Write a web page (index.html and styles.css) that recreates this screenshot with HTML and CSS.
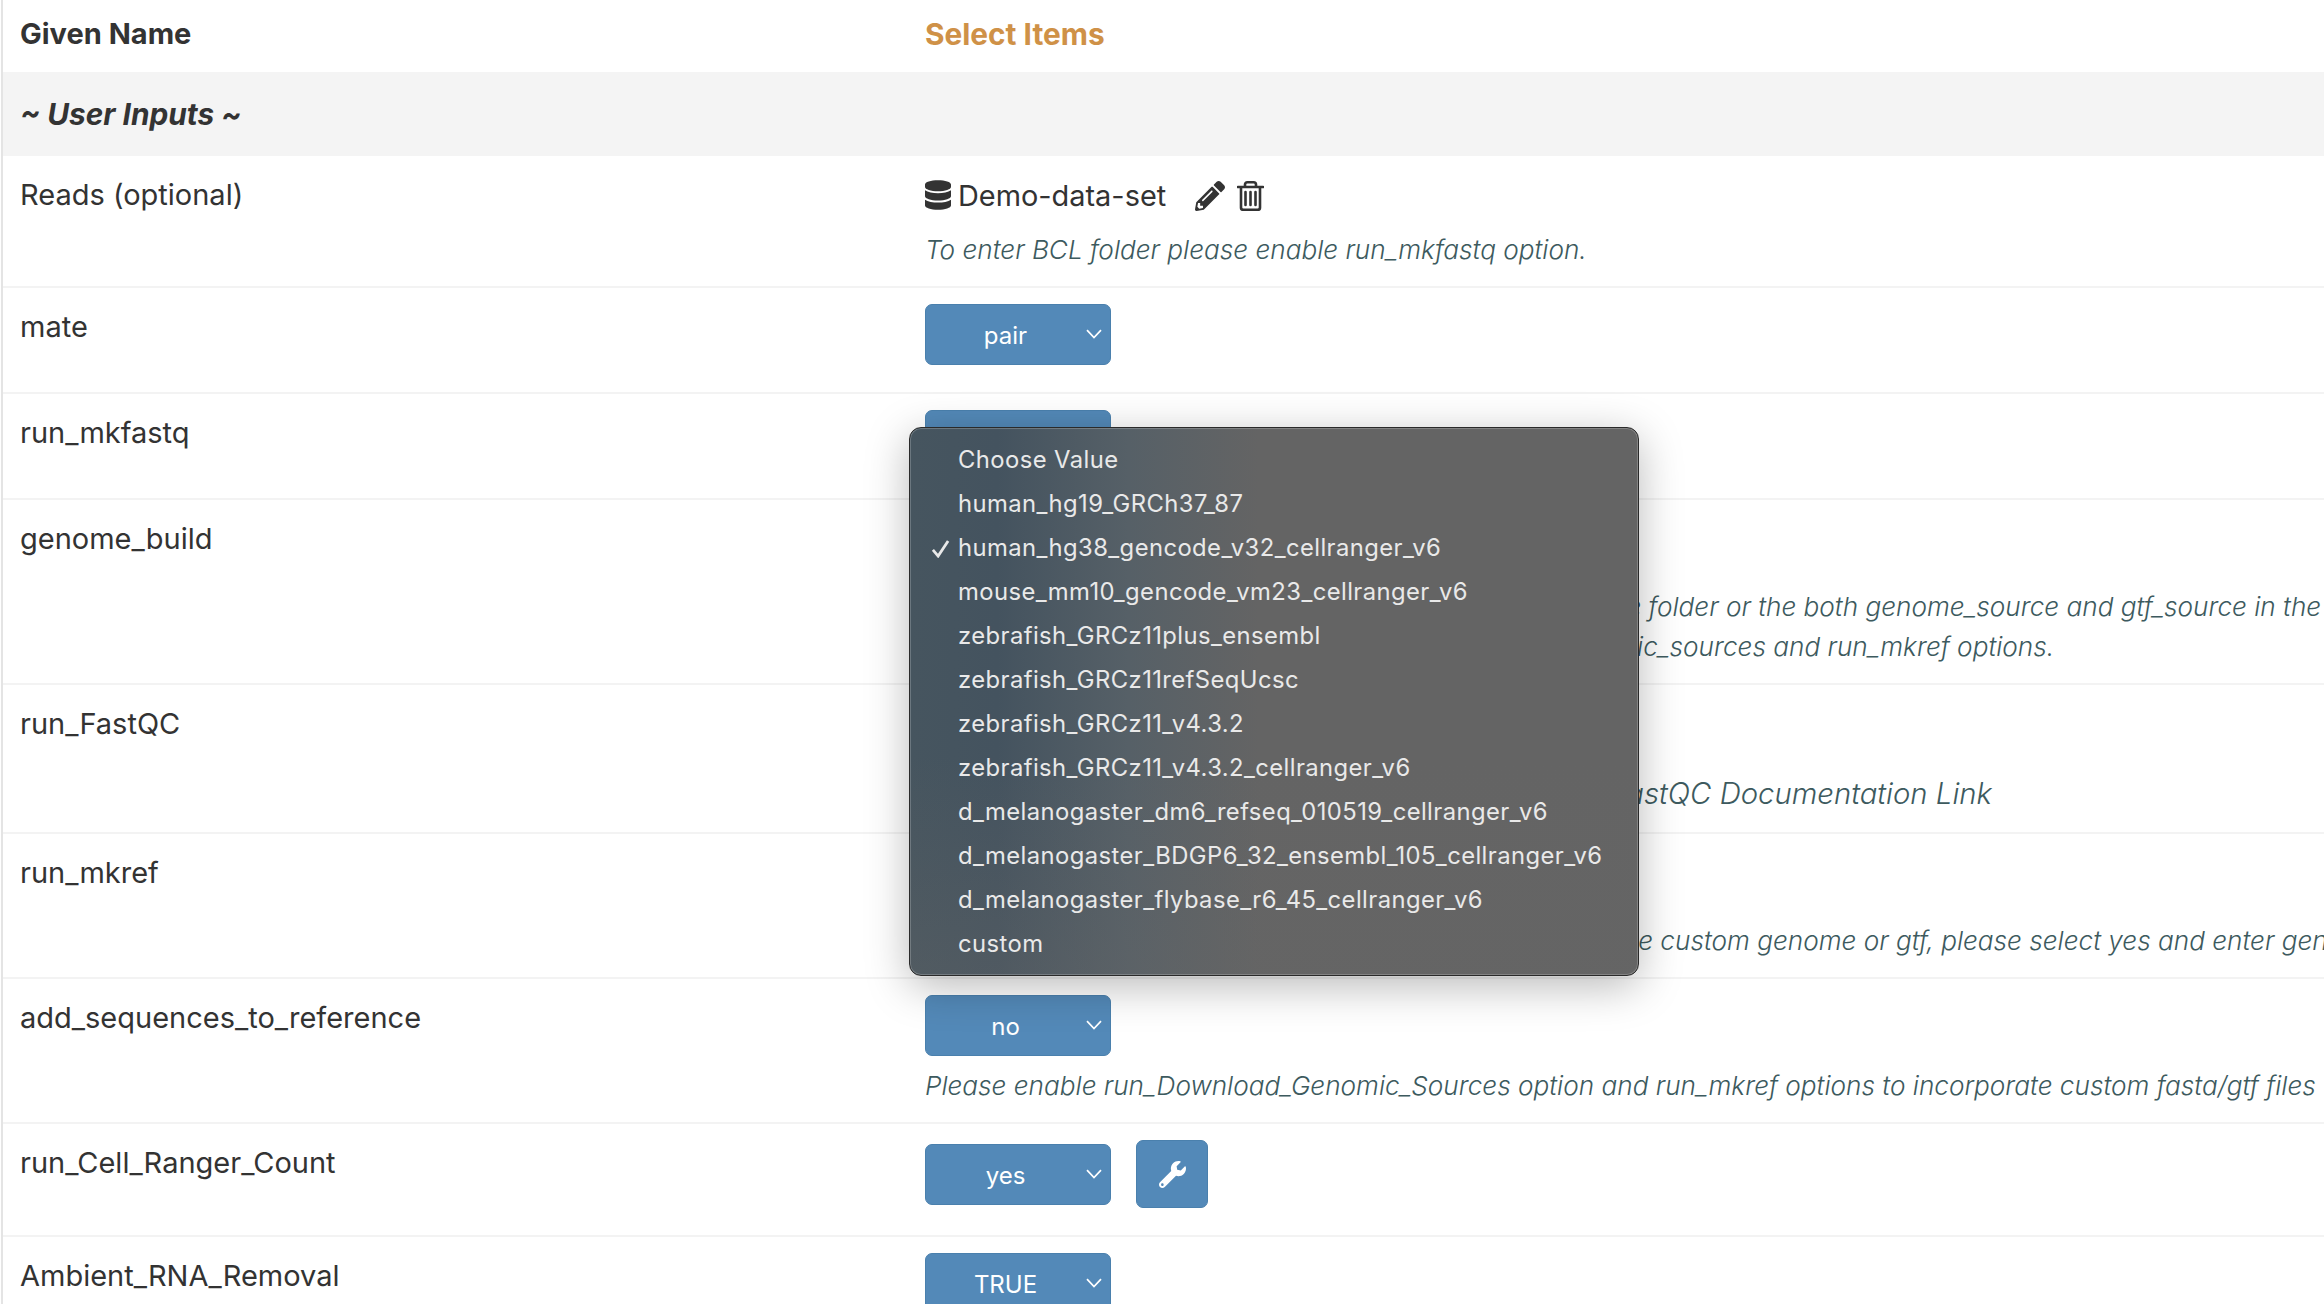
FILE: index.html
```html
<!DOCTYPE html>
<html lang="en">
<head>
<meta charset="utf-8">
<title>Run settings</title>
<link rel="stylesheet" href="styles.css">
</head>
<body>
<main class="sheet">
  <div class="row head">
    <div class="name">Given Name</div>
    <div class="val select-title">Select Items</div>
  </div>
  <div class="band">~ User Inputs ~</div>

  <div class="row">
    <div class="name">Reads (optional)</div>
    <div class="val">
      <div class="file">
        <svg class="ic-db" viewBox="0 0 448 512"><path d="M448 73.143v45.714C448 159.143 347.667 192 224 192S0 159.143 0 118.857V73.143C0 32.857 100.333 0 224 0s224 32.857 224 73.143zM448 176v102.857C448 319.143 347.667 352 224 352S0 319.143 0 278.857V176c48.125 33.143 136.208 48.572 224 48.572S399.874 209.143 448 176zm0 160v102.857C448 479.143 347.667 512 224 512S0 479.143 0 438.857V336c48.125 33.143 136.208 48.572 224 48.572S399.874 369.143 448 336z"/></svg>
        <span class="file-name">Demo-data-set</span>
        <svg class="ic-pen" viewBox="0 0 512 512"><path d="M497.9 142.1l-46.1 46.1c-4.7 4.7-12.3 4.7-17 0l-111-111c-4.7-4.7-4.7-12.3 0-17l46.1-46.1c18.7-18.7 49.1-18.7 67.9 0l60.1 60.1c18.8 18.7 18.8 49.1 0 67.9zM284.2 99.8L21.6 362.4.4 483.9c-2.9 16.4 11.4 30.6 27.8 27.8l121.5-21.3 262.6-262.6c4.3-4.3 4.3-11.3 0-15.6L300 99.8c-4.4-4.3-11.4-4.3-15.8 0zM124.1 339.9c-5.1-5.1-5.1-13.3 0-18.4l154-154c5.1-5.1 13.3-5.1 18.4 0s5.1 13.3 0 18.4l-154 154c-5.1 5.1-13.3 5.1-18.4 0zM88 424h48v36.3l-64.5 11.3-31.1-31.1L51.7 376H88v48z"/></svg>
        <svg class="ic-trash" viewBox="0 0 27 30"><path d="M1 6h25M8 6V3.6Q8 1.3 10.4 1.3h6.2Q19 1.3 19 3.6V6M4 6v20.4Q4 28.8 6.4 28.8h14.2Q23 28.8 23 26.4V6M8.5 11v13M13.5 11v13M18.5 11v13"/></svg>
      </div>
      <p class="note">To enter BCL folder please enable run_mkfastq option.</p>
    </div>
  </div>

  <div class="row plain">
    <div class="name">mate</div>
    <div class="val"><div class="pick"><span>pair</span><svg class="chev" viewBox="0 0 16 10"><path d="M1 1.2l7 7.4 7-7.4"/></svg></div></div>
  </div>

  <div class="row plain">
    <div class="name">run_mkfastq</div>
    <div class="val"><div class="pick"><span>no</span><svg class="chev" viewBox="0 0 16 10"><path d="M1 1.2l7 7.4 7-7.4"/></svg></div></div>
  </div>

  <div class="row">
    <div class="name">genome_build</div>
    <div class="val">
      <div class="pick"><span>custom</span><svg class="chev" viewBox="0 0 16 10"><path d="M1 1.2l7 7.4 7-7.4"/></svg></div>
      <p class="note">If you choose the custom option please enter your genome folder or the both genome_source and gtf_source in the run settings.<br>Otherwise, you can also enable the run_Download_Genomic_sources and run_mkref options.</p>
    </div>
  </div>

  <div class="row">
    <div class="name">run_FastQC</div>
    <div class="val">
      <div class="pick"><span>no</span><svg class="chev" viewBox="0 0 16 10"><path d="M1 1.2l7 7.4 7-7.4"/></svg></div>
      <p class="note link">Please check out the details of this module on the FastQC Documentation Link</p>
    </div>
  </div>

  <div class="row">
    <div class="name">run_mkref</div>
    <div class="val">
      <div class="pick"><span>no</span><svg class="chev" viewBox="0 0 16 10"><path d="M1 1.2l7 7.4 7-7.4"/></svg></div>
      <p class="note">If you would like to create a new local reference file with the custom genome or gtf, please select yes and enter genome_source and gtf_source.</p>
    </div>
  </div>

  <div class="row">
    <div class="name">add_sequences_to_reference</div>
    <div class="val">
      <div class="pick"><span>no</span><svg class="chev" viewBox="0 0 16 10"><path d="M1 1.2l7 7.4 7-7.4"/></svg></div>
      <p class="note">Please enable run_Download_Genomic_Sources option and run_mkref options to incorporate custom fasta/gtf files</p>
    </div>
  </div>

  <div class="row">
    <div class="name">run_Cell_Ranger_Count</div>
    <div class="val tool-line">
      <div class="pick"><span>yes</span><svg class="chev" viewBox="0 0 16 10"><path d="M1 1.2l7 7.4 7-7.4"/></svg></div>
      <div class="tool"><svg viewBox="0 0 512 512"><path d="M507.73 109.1c-2.24-9.03-13.54-12.09-20.12-5.51l-74.36 74.36-67.88-11.31-11.31-67.88 74.36-74.36c6.62-6.62 3.43-17.9-5.66-20.16-47.38-11.74-99.55.91-136.58 37.93-39.64 39.64-50.55 97.1-34.05 147.2L18.74 402.76c-24.99 24.99-24.99 65.51 0 90.5 24.99 24.99 65.51 24.99 90.5 0l213.21-213.21c50.12 16.71 107.47 5.68 147.37-34.22 37.07-37.07 49.7-89.32 37.91-136.73zM64 472c-13.25 0-24-10.75-24-24 0-13.26 10.75-24 24-24s24 10.74 24 24c0 13.25-10.75 24-24 24z"/></svg></div>
    </div>
  </div>

  <div class="row">
    <div class="name">Ambient_RNA_Removal</div>
    <div class="val">
      <div class="pick"><span>TRUE</span><svg class="chev" viewBox="0 0 16 10"><path d="M1 1.2l7 7.4 7-7.4"/></svg></div>
    </div>
  </div>
</main>

<div class="menu">
  <div class="opt">Choose Value</div>
  <div class="opt">human_hg19_GRCh37_87</div>
  <div class="opt"><svg class="tick" viewBox="0 0 20 20"><path d="M2 11.5l5.5 6.5L18 2"/></svg>human_hg38_gencode_v32_cellranger_v6</div>
  <div class="opt">mouse_mm10_gencode_vm23_cellranger_v6</div>
  <div class="opt">zebrafish_GRCz11plus_ensembl</div>
  <div class="opt">zebrafish_GRCz11refSeqUcsc</div>
  <div class="opt">zebrafish_GRCz11_v4.3.2</div>
  <div class="opt">zebrafish_GRCz11_v4.3.2_cellranger_v6</div>
  <div class="opt">d_melanogaster_dm6_refseq_010519_cellranger_v6</div>
  <div class="opt">d_melanogaster_BDGP6_32_ensembl_105_cellranger_v6</div>
  <div class="opt">d_melanogaster_flybase_r6_45_cellranger_v6</div>
  <div class="opt">custom</div>
</div>
</body>
</html>
```
FILE: styles.css
```css
* { box-sizing: border-box; }
html, body { margin: 0; height: 100%; }
body {
  height: 1304px;
  overflow: hidden;
  background: #fff;
  color: #333;
  font-family: Inter, "Liberation Sans", sans-serif;
  font-size: 29px;
  position: relative;
}
.sheet {
  margin-left: 1px;
  border-left: 2px solid #e4e4e4;
  height: 1304px;
  overflow: hidden;
}
.row {
  display: grid;
  grid-template-columns: 922px 1400px;
  padding: 16px 0;
  border-bottom: 2px solid #f3f3f3;
}
.row.plain { min-height: 106px; }
.name { padding: 1px 0 0 17px; line-height: 44px; white-space: nowrap; }
.val { min-width: 0; white-space: nowrap; }
.head {
  height: 72px;
  padding: 11px 0;
  border-bottom: 0;
  font-weight: 700;
}
.select-title { color: #cf9147; line-height: 46px; font-size: 29.8px; }
.band {
  height: 84px;
  padding-left: 17px;
  background: #f4f4f4;
  font-size: 29.8px;
  font-weight: 700;
  font-style: italic;
  line-height: 85px;
}
.file {
  display: flex;
  align-items: center;
  height: 46px;
  margin-bottom: 12px;
}
.ic-db { width: 26px; height: 30px; fill: #333; }
.file-name { margin-left: 7px; font-size: 28.9px; }
.ic-pen { width: 30px; height: 30px; margin-left: 29px; fill: #333; margin-top: 2px; }
.ic-trash {
  width: 27px;
  height: 30px;
  margin-left: 12px;
  margin-top: 2px;
  fill: none;
  stroke: #333;
  stroke-width: 2.6;
  stroke-linecap: round;
}
.note {
  margin: 0;
  font-size: 26.15px;
  line-height: 40px;
  font-style: italic;
  font-weight: 300;
  color: #3d5a5e;
}
.note.link { font-size: 29.3px; line-height: 44px; }
.pick {
  position: relative;
  width: 186px;
  height: 61px;
  margin-bottom: 10px;
  border: 1px solid #4a80ad;
  border-radius: 7px;
  background: #5389b8;
  color: #fff;
  font-size: 24px;
  line-height: 61px;
  padding-right: 25px;
  text-align: center;
}
.chev {
  position: absolute;
  right: 8px;
  top: 24px;
  width: 16px;
  height: 10px;
  fill: none;
  stroke: #fff;
  stroke-width: 1.7;
}
.tool-line { display: flex; align-items: center; gap: 25px; margin-bottom: 11px; }
.tool-line .pick { margin-bottom: 0; }
.tool {
  display: flex;
  align-items: center;
  justify-content: center;
  width: 72px;
  height: 68px;
  border: 1px solid #4a80ad;
  border-radius: 7px;
  background: #5389b8;
}
.tool svg { width: 27px; height: 27px; fill: #fff; }
.menu {
  position: absolute;
  left: 909px;
  top: 427px;
  width: 730px;
  height: 549px;
  padding: 10px 0 10px 48px;
  border: 1px solid #2a2a2a;
  border-radius: 12px;
  background:
    linear-gradient(180deg, rgba(102,102,102,0) 60%, rgba(102,102,102,.35) 100%),
    linear-gradient(90deg, #46555f 0%, #44535f 12%, #566067 30%, #646464 48%, #646464 100%);
  box-shadow: inset 0 0 0 1px rgba(255,255,255,.2), 0 10px 44px rgba(0,0,0,.28);
  color: #e9e9e9;
  font-size: 23.8px;
  letter-spacing: .42px;
  font-weight: 400;
}
.opt {
  position: relative;
  height: 44px;
  line-height: 44px;
  white-space: nowrap;
}
.tick {
  position: absolute;
  left: -27px;
  top: 13px;
  width: 19px;
  height: 19px;
  fill: none;
  stroke: #e9e9e9;
  stroke-width: 2.9;
}
```
